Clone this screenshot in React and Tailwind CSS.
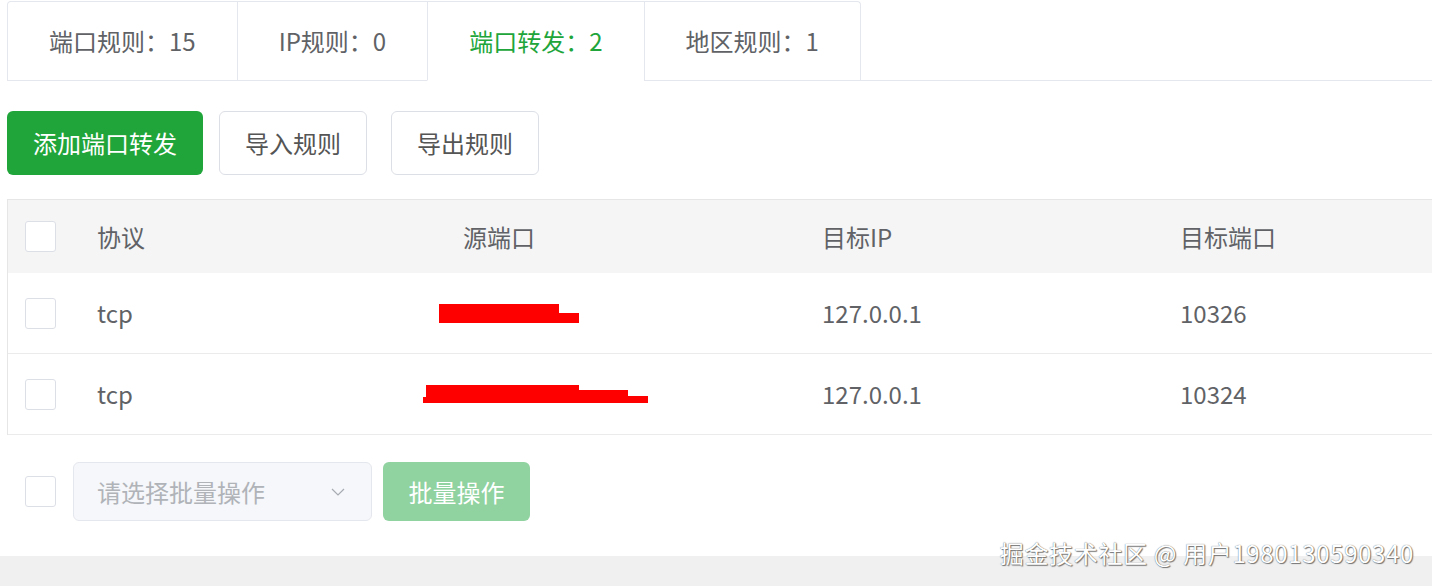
const FONT = { fontFamily: '"Noto Sans CJK SC", "Noto Sans", sans-serif' };

const tabs = [
  { label: '端口规则：15' },
  { label: 'IP规则：0' },
  { label: '端口转发：2', active: true },
  { label: '地区规则：1' },
];

const rows = [
  { proto: 'tcp', ip: '127.0.0.1', port: '10326', mask: 1 },
  { proto: 'tcp', ip: '127.0.0.1', port: '10324', mask: 2 },
];

function Checkbox() {
  return <div className="w-[31px] h-[31px] shrink-0 border border-[#dcdfe6] rounded-[3px] bg-white" />;
}

function Redaction({ variant }) {
  return (
    <svg width="230" height="24" viewBox="0 0 230 24" className="block">
      {variant === 1 ? (
        <>
          <rect x="16" y="3" width="120" height="19" fill="#ff0000" />
          <rect x="135" y="12" width="21" height="10" fill="#ff0000" />
        </>
      ) : (
        <>
          <rect x="0" y="15" width="4" height="6" fill="#ff0000" />
          <rect x="3" y="3" width="153" height="18" fill="#ff0000" />
          <rect x="155" y="8" width="50" height="13" fill="#ff0000" />
          <rect x="204" y="14" width="21" height="7" fill="#ff0000" />
        </>
      )}
    </svg>
  );
}

export default function App() {
  return (
    <div className="relative w-[1432px] h-[586px] overflow-hidden bg-[#f0f0f0] text-[#606266]" style={FONT}>
      <div className="bg-white h-[556px] pl-[7px] pt-[1px]">
        {/* tabs */}
        <div className="flex">
          <div className="flex border-t border-l border-r border-[#e4e7ed] rounded-t-[4px]">
            {tabs.map((t, i) => (
              <div
                key={t.label}
                className={`h-[79px] flex items-center px-[41px] text-[24px] border-b ${i > 0 ? 'border-l border-l-[#e4e7ed]' : ''} ${
                  t.active ? 'text-[#20a53a] border-b-white' : 'border-b-[#e4e7ed]'
                }`}
              >
                {t.label}
              </div>
            ))}
          </div>
          <div className="flex-1 border-b border-[#e4e7ed]" />
        </div>

        {/* actions */}
        <div className="flex items-center mt-[30px]">
          <button className="h-[64px] px-[26px] rounded-[6px] bg-[#20a53a] text-white text-[24px]">添加端口转发</button>
          <button className="h-[64px] px-[25px] ml-4 rounded-[6px] border border-[#dcdfe6] bg-white text-[24px] text-[#555]">导入规则</button>
          <button className="h-[64px] px-[25px] ml-6 rounded-[6px] border border-[#dcdfe6] bg-white text-[24px] text-[#555]">导出规则</button>
        </div>

        {/* table */}
        <div className="mt-[24px] border-l border-t border-[#e6e6e6] text-[24px]">
          <div className="flex items-center h-[73px] bg-[#f5f5f5]">
            <div className="w-[67px] pl-[17px]"><Checkbox /></div>
            <div className="w-[345px] pl-[22px]">协议</div>
            <div className="w-[380px] pl-[43px]">源端口</div>
            <div className="w-[358px] pl-[22px]">目标IP</div>
            <div className="flex-1 pl-[22px]">目标端口</div>
          </div>
          {rows.map((r) => (
            <div key={r.port} className="flex items-center h-[81px] border-b border-[#ebebeb]">
              <div className="w-[67px] pl-[17px]"><Checkbox /></div>
              <div className="w-[345px] pl-[22px]">{r.proto}</div>
              <div className="w-[380px] pl-[3px]"><Redaction variant={r.mask} /></div>
              <div className="w-[358px] pl-[22px]">{r.ip}</div>
              <div className="flex-1 pl-[22px]">{r.port}</div>
            </div>
          ))}
        </div>

        {/* batch */}
        <div className="flex items-center mt-[27px] pl-[18px]">
          <Checkbox />
          <div className="ml-[17px] w-[299px] h-[59px] flex items-center justify-between pl-[23px] pr-[26px] rounded-[6px] border border-[#e4e7ed] bg-[#f5f7fa] text-[24px] text-[#b0b3b8]">
            <span>请选择批量操作</span>
            <svg width="14" height="8" viewBox="0 0 14 8" fill="none" stroke="#a8abb2" strokeWidth="1.2">
              <path d="M1 1l6 6 6-6" />
            </svg>
          </div>
          <button className="ml-[11px] w-[147px] h-[59px] rounded-[6px] bg-[#90d2a0] text-white text-[24px]">批量操作</button>
        </div>
      </div>

      <div className="absolute right-[18px] top-[535px] text-[24px] tracking-[0.65px] text-white [text-shadow:0_0_1px_#555,1px_1px_1px_#777]">
        掘金技术社区 @ 用户1980130590340
      </div>
    </div>
  );
}
